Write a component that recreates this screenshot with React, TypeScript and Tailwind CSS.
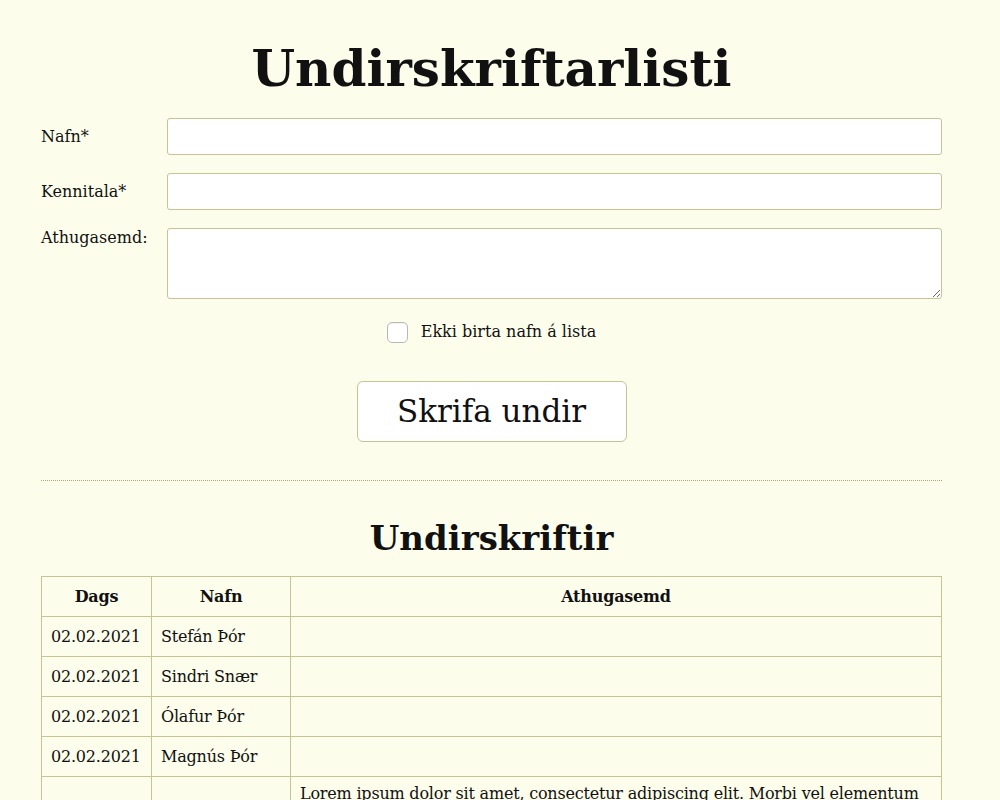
const rows = [
  { date: "02.02.2021", name: "Stefán Þór", comment: "" },
  { date: "02.02.2021", name: "Sindri Snær", comment: "" },
  { date: "02.02.2021", name: "Ólafur Þór", comment: "" },
  { date: "02.02.2021", name: "Magnús Þór", comment: "" },
  {
    date: "",
    name: "",
    comment:
      "Lorem ipsum dolor sit amet, consectetur adipiscing elit. Morbi vel elementum nisi. Donec vitae urna et purus fermentum tincidunt. Integer at sapien non lorem luctus posuere.",
  },
];

const App = () => (
  <div className="min-h-screen bg-[#fdfdec] text-[#111] font-['DejaVu_Serif',Georgia,serif]">
    <main className="ml-[41px] w-[901px]">
      <h1 className="pt-[39px] pb-[19px] text-center text-[50px] leading-[60px] font-bold">
        Undirskriftarlisti
      </h1>

      <form className="flex flex-col gap-[18px]">
        <label className="flex items-center">
          <span className="w-[126px] text-[16px]">Nafn*</span>
          <input className="flex-1 h-[37px] rounded-[3px] border border-[#c4c494] bg-white px-2" />
        </label>
        <label className="flex items-center">
          <span className="w-[126px] text-[16px]">Kennitala*</span>
          <input className="flex-1 h-[37px] rounded-[3px] border border-[#c4c494] bg-white px-2" />
        </label>
        <label className="flex items-start">
          <span className="w-[126px] text-[16px] leading-[20px]">Athugasemd:</span>
          <textarea className="flex-1 h-[71px] rounded-[3px] border border-[#c4c494] bg-white px-2" />
        </label>
      </form>

      <label className="mt-[21px] flex items-center justify-center gap-[13px] text-[16px] leading-[24px]">
        <input
          type="checkbox"
          className="appearance-none w-[21px] h-[21px] rounded-[5px] border border-[#b8b8b8] bg-white shadow-[inset_0_1px_1px_rgba(0,0,0,0.06)]"
        />
        <span>Ekki birta nafn á lista</span>
      </label>

      <div className="mt-[37px] flex justify-center">
        <button
          type="button"
          className="w-[270px] h-[61px] rounded-[6px] border border-[#c4c494] bg-white text-[31px]"
        >
          Skrifa undir
        </button>
      </div>

      <hr className="mt-[38px] border-0 border-t border-dotted border-[#a9a97a]" />

      <h2 className="mt-[36px] mb-[17px] text-center text-[34px] leading-[42px] font-bold">
        Undirskriftir
      </h2>

      <table className="w-full border-collapse text-[16px] tracking-[-0.2px]">
        <thead>
          <tr className="h-[40px]">
            <th className="w-[110px] border border-[#c4c494] font-bold">Dags</th>
            <th className="w-[139px] border border-[#c4c494] font-bold">Nafn</th>
            <th className="border border-[#c4c494] font-bold">Athugasemd</th>
          </tr>
        </thead>
        <tbody>
          {rows.map((r, i) => (
            <tr key={i} className="h-[40px]">
              <td className="border border-[#c4c494] pl-[9px] pr-[10px] align-middle">{r.date}</td>
              <td className="border border-[#c4c494] pl-[9px] pr-[10px] align-middle">{r.name}</td>
              <td className="border border-[#c4c494] pl-[9px] pr-[10px] pt-[6px] pb-[8px] leading-[22px] align-top">
                {r.comment}
              </td>
            </tr>
          ))}
        </tbody>
      </table>
    </main>
  </div>
);

export default App;
